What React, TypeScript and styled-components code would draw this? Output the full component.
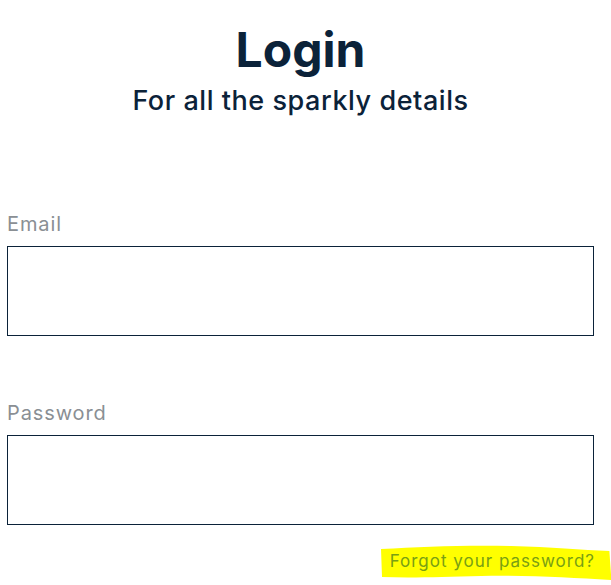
import React from "react";
import styled, { createGlobalStyle } from "styled-components";

const Global = createGlobalStyle`
  html, body { margin: 0; padding: 0; background: #ffffff; }
  body { font-family: "Inter", "Open Sans", sans-serif; }
  * { box-sizing: border-box; }
`;

const Page = styled.main`
  width: 611px;
  padding: 0 17px 0 7px;
`;

const Header = styled.header`
  display: flex;
  flex-direction: column;
  align-items: center;
  padding-top: 22px;
`;

const Title = styled.h1`
  margin: 0;
  font-size: 48px;
  line-height: 56px;
  font-weight: 700;
  color: #0b2239;
`;

const Subtitle = styled.h2`
  margin: 6px 0 0;
  font-size: 27px;
  line-height: 34px;
  font-weight: 500;
  letter-spacing: 0.55px;
  color: #0b2239;
`;

const Form = styled.form`
  display: flex;
  flex-direction: column;
  gap: 65px;
  margin-top: 94px;
`;

const Field = styled.label`
  display: flex;
  flex-direction: column;
  gap: 10px;
`;

const Label = styled.span`
  font-size: 20px;
  line-height: 24px;
  letter-spacing: 0.9px;
  color: #8a8f94;
`;

const Input = styled.input`
  width: 587px;
  height: 90px;
  border: 1px solid #0b2239;
  border-radius: 0;
  outline: none;
  padding: 0 12px;
  font-size: 18px;
`;

const Footer = styled.div`
  display: flex;
  justify-content: flex-end;
  margin-top: 20px;
  margin-right: -17px;
`;

const Highlight = styled.a`
  position: relative;
  display: inline-block;
  padding: 6px 16px 10px 9px;
  font-size: 17px;
  line-height: 20px;
  letter-spacing: 1px;
  color: #78a014;
  text-decoration: none;
`;

const Mark = styled.svg`
  position: absolute;
  inset: 0;
  width: 100%;
  height: 100%;
  z-index: 0;
`;

const LinkText = styled.span`
  position: relative;
  z-index: 1;
`;

export default function App() {
  return (
    <>
      <Global />
      <Page>
        <Header>
          <Title>Login</Title>
          <Subtitle>For all the sparkly details</Subtitle>
        </Header>
        <Form onSubmit={(e) => e.preventDefault()}>
          <Field>
            <Label>Email</Label>
            <Input type="email" />
          </Field>
          <Field>
            <Label>Password</Label>
            <Input type="password" />
          </Field>
        </Form>
        <Footer>
          <Highlight href="#">
            <Mark viewBox="0 0 230 36" preserveAspectRatio="none" aria-hidden="true">
              <path
                d="M0 4 C 40 2, 80 0, 130 1 C 170 2, 200 5, 228 6 L 230 35 C 190 33, 150 30, 100 31 C 60 32, 30 33, 1 32 Z"
                fill="#ffff00"
              />
            </Mark>
            <LinkText>Forgot your password?</LinkText>
          </Highlight>
        </Footer>
      </Page>
    </>
  );
}
